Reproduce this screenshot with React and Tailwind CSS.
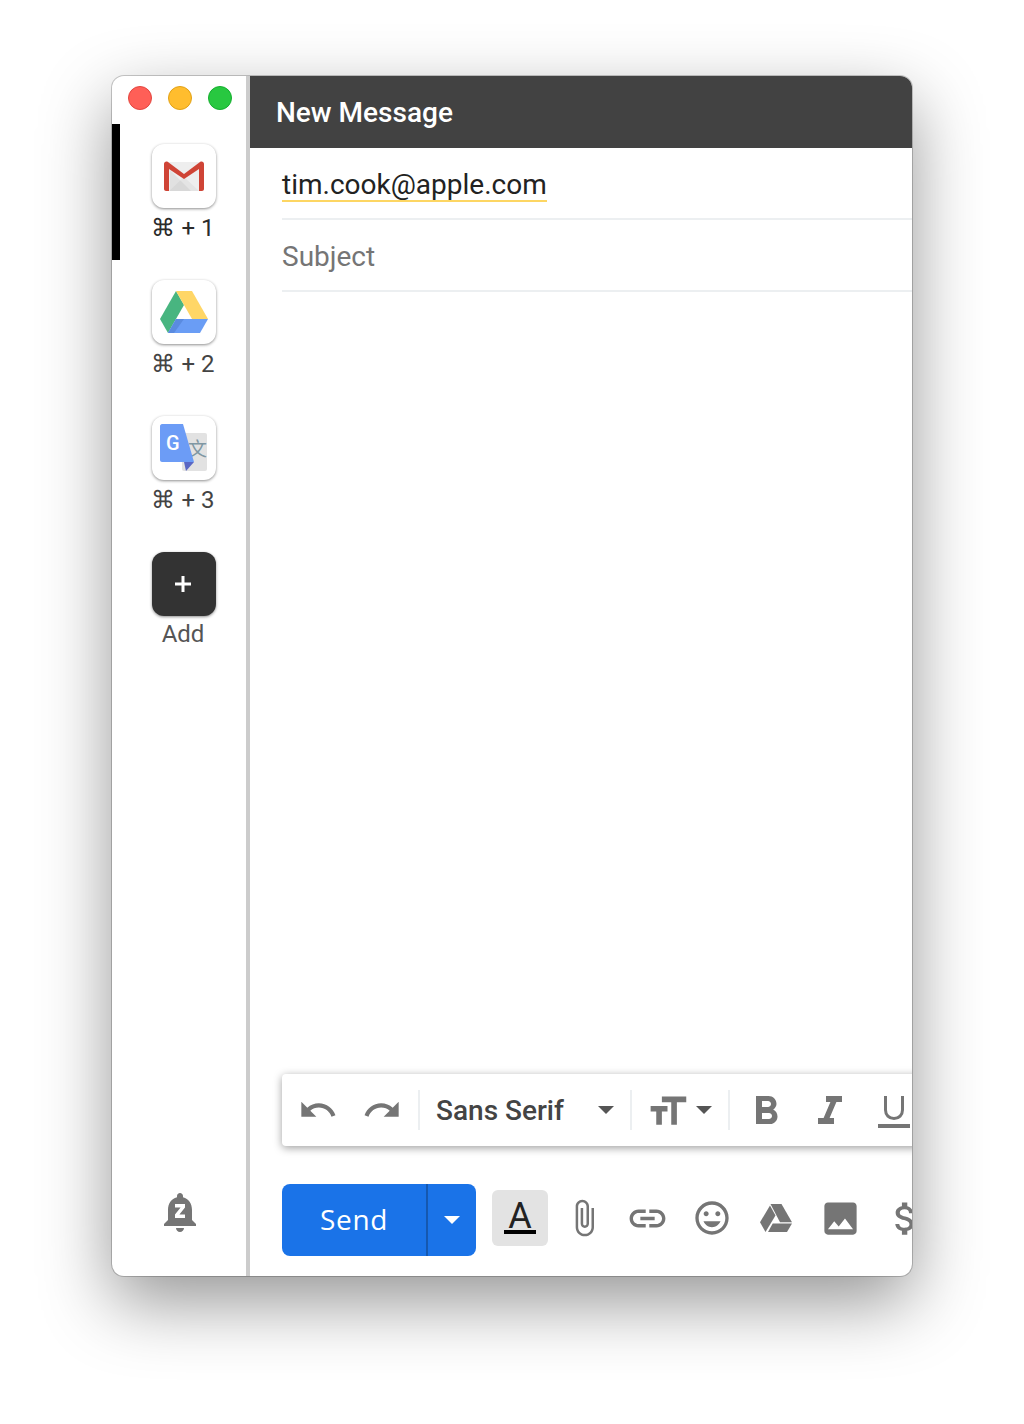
import React from 'react';

const Icon = ({ d, size = 40, className = 'fill-[#757575]' }) => (
  <svg width={size} height={size} viewBox="0 0 24 24" className={`shrink-0 ${className}`}>
    <path d={d} fillRule="evenodd" />
  </svg>
);

const UNDO = 'M12.5 8c-2.65 0-5.05.99-6.9 2.6L2 7v9h9l-3.62-3.62c1.39-1.16 3.16-1.88 5.12-1.88 3.54 0 6.55 2.31 7.6 5.5l2.37-.78C21.08 11.03 17.15 8 12.5 8z';
const REDO = 'M18.4 10.6C16.55 8.99 14.15 8 11.5 8c-4.65 0-8.58 3.03-9.96 7.22L3.9 16c1.05-3.19 4.05-5.5 7.6-5.5 1.95 0 3.73.72 5.12 1.88L13 16h9V7l-3.6 3.6z';
const SIZE = 'M9 4v3h5v12h3V7h5V4H9zm-6 8h3v7h3v-7h3V9H3v3z';
const BOLD = 'M15.6 10.79c.97-.67 1.65-1.77 1.65-2.79 0-2.26-1.75-4-4-4H7v14h7.04c2.09 0 3.71-1.7 3.71-3.79 0-1.52-.86-2.82-2.15-3.42zM10 6.5h3c.83 0 1.5.67 1.5 1.5s-.67 1.5-1.5 1.5h-3v-3zm3.5 9H10v-3h3.5c.83 0 1.5.67 1.5 1.5s-.67 1.5-1.5 1.5z';
const ITALIC = 'M10 4v3h2.21l-3.42 8H6v3h8v-3h-2.21l3.42-8H18V4z';
const CLIP = 'M16.5 6v11.5c0 2.21-1.79 4-4 4s-4-1.79-4-4V5c0-1.38 1.12-2.5 2.5-2.5s2.5 1.12 2.5 2.5v10.5c0 .55-.45 1-1 1s-1-.45-1-1V6H10v9.5c0 1.38 1.12 2.5 2.5 2.5s2.5-1.12 2.5-2.5V5c0-2.21-1.79-4-4-4S7 2.79 7 5v12.5c0 3.04 2.46 5.5 5.5 5.5s5.5-2.46 5.5-5.5V6h-1.5z';
const LINK = 'M3.9 12c0-1.71 1.39-3.1 3.1-3.1h4V7H7c-2.76 0-5 2.24-5 5s2.24 5 5 5h4v-1.9H7c-1.71 0-3.1-1.39-3.1-3.1zM8 13h8v-2H8v2zm9-6h-4v1.9h4c1.71 0 3.1 1.39 3.1 3.1s-1.39 3.1-3.1 3.1h-4V17h4c2.76 0 5-2.24 5-5s-2.24-5-5-5z';
const SMILE = 'M11.99 2C6.47 2 2 6.48 2 12s4.47 10 9.99 10C17.52 22 22 17.52 22 12S17.52 2 11.99 2zM12 20c-4.42 0-8-3.58-8-8s3.58-8 8-8 8 3.58 8 8-3.58 8-8 8zm3.5-9c.83 0 1.5-.67 1.5-1.5S16.33 8 15.5 8 14 8.67 14 9.5s.67 1.5 1.5 1.5zm-7 0c.83 0 1.5-.67 1.5-1.5S9.33 8 8.5 8 7 8.67 7 9.5 7.67 11 8.5 11zm3.5 6.5c2.33 0 4.31-1.46 5.11-3.5H6.89c.8 2.04 2.78 3.5 5.11 3.5z';
const IMAGE = 'M21 19V5c0-1.1-.9-2-2-2H5c-1.1 0-2 .9-2 2v14c0 1.1.9 2 2 2h14c1.1 0 2-.9 2-2zM8.5 13.5l2.5 3.01L14.5 12l4.5 6H5l3.5-4.5z';
const DOLLAR = 'M11.8 10.9c-2.27-.59-3-1.2-3-2.15 0-1.09 1.01-1.85 2.7-1.85 1.78 0 2.44.85 2.5 2.1h2.21c-.07-1.72-1.12-3.3-3.21-3.81V3h-3v2.16c-1.94.42-3.5 1.68-3.5 3.61 0 2.31 1.91 3.46 4.7 4.13 2.5.6 3 1.48 3 2.41 0 .69-.49 1.79-2.7 1.79-2.06 0-2.87-.92-2.98-2.1h-2.2c.12 2.19 1.76 3.42 3.68 3.83V21h3v-2.15c1.95-.37 3.5-1.5 3.5-3.55 0-2.84-2.43-3.81-4.7-4.4z';
const BELL = 'M12 22c1.1 0 2-.9 2-2h-4c0 1.1.89 2 2 2zm6-6v-5c0-3.07-1.64-5.64-4.5-6.32V4c0-.83-.67-1.5-1.5-1.5s-1.5.67-1.5 1.5v.68C7.63 5.36 6 7.93 6 11v5l-2 2v1h16v-1l-2-2zm-3.5-6.2l-2.8 3.4h2.8V15h-5v-1.8l2.8-3.4H9.5V8h5v1.8z';

const GmailLogo = () => (
  <svg width="40" height="30" viewBox="0 0 40 30">
    <rect x="2" y="1" width="36" height="29" fill="#eeeeee" />
    <path d="M5 30 L20 16 L35 30 Z" fill="#e4e4e4" />
    <path d="M6 9 L27 30 H6 Z" fill="#000" opacity="0.05" />
    <path d="M0 3 C0 1 2 0 4 1 L20 13 L36 1 C38 0 40 1 40 3 V28 C40 29 39 30 38 30 H35 V8 L20 18 L5 8 V30 H2 C1 30 0 29 0 28 Z" fill="#cf4436" />
  </svg>
);

const DriveLogo = () => (
  <svg width="48" height="42" viewBox="0 0 48 42">
    <path d="M16 0 L0 28 L8 42 L24 14 Z" fill="#48b580" />
    <path d="M16 0 H32 L48 28 H32 Z" fill="#ffd666" />
    <path d="M16 28 H48 L40 42 H8 Z" fill="#6a9df5" />
    <path d="M16 28 H24 L14 42 H8 Z" fill="#5a8be0" />
  </svg>
);

const TranslateLogo = () => (
  <svg width="48" height="48" viewBox="0 0 48 48">
    <rect x="22" y="9" width="25" height="38" rx="2" fill="#e2e2e2" />
    <text x="28" y="32" fontSize="19" fill="#7f97a3" fontFamily="'Noto Sans CJK SC', sans-serif">文</text>
    <path d="M2 0 H23 L34 38 H2 C1 38 0 37 0 36 V2 C0 1 1 0 2 0 Z" fill="#6c9cf6" />
    <path d="M24 38 H34 L26 47 Z" fill="#5a67c4" />
    <text x="6" y="26" fontSize="20" fontWeight="500" fill="#fff" fontFamily="Roboto, sans-serif">G</text>
  </svg>
);

const APPS = [
  { logo: <GmailLogo />, label: '⌘ + 1', active: true },
  { logo: <DriveLogo />, label: '⌘ + 2' },
  { logo: <TranslateLogo />, label: '⌘ + 3' },
];

const Caret = ({ className = 'border-t-[#555]' }) => (
  <span className={`block w-0 h-0 border-x-8 border-x-transparent border-t-8 ${className}`} />
);

const Sep = () => <span className="block w-0.5 h-10 bg-[#eceff1] shrink-0" />;

export default function App() {
  return (
    <div className="h-[1424px] bg-white pt-[76px] overflow-hidden font-['Roboto',sans-serif]">
      <div className="mx-auto w-[800px] h-[1200px] rounded-xl overflow-hidden flex bg-white shadow-[0_0_0_1px_rgba(0,0,0,0.2),0_26px_70px_0_rgba(0,0,0,0.42)]">
        {/* App switcher */}
        <aside className="w-[138px] shrink-0 border-r-4 border-[#cccccc] flex flex-col">
          <div className="h-12 shrink-0 flex items-start gap-4 pl-4 pt-2.5">
            <span className="size-6 rounded-full bg-[#ff5f57] border border-[#e2463f]" />
            <span className="size-6 rounded-full bg-[#ffbd2e] border border-[#e1a116]" />
            <span className="size-6 rounded-full bg-[#28c840] border border-[#14ae2e]" />
          </div>
          {APPS.map((app) => (
            <div
              key={app.label}
              className={`h-[136px] shrink-0 flex flex-col items-center pt-5 pl-0.5 border-l-8 ${app.active ? 'border-black' : 'border-transparent'}`}
            >
              <div className="size-16 rounded-xl bg-white flex items-center justify-center shadow-[0_1px_3px_rgba(0,0,0,0.45)]">
                {app.logo}
              </div>
              <span className={`mt-1.5 -ml-0.5 text-2xl leading-7 ${app.active ? 'text-[#2b2b2b]' : 'text-[#444444]'}`}>{app.label}</span>
            </div>
          ))}
          <div className="shrink-0 flex flex-col items-center pt-5 pl-2.5">
            <div className="size-16 rounded-xl bg-[#333333] flex items-center justify-center shadow-[0_1px_3px_rgba(0,0,0,0.45)]">
              <svg width="16" height="16" viewBox="0 0 16 16" className="fill-white -ml-0.5">
                <path d="M6.5 0h3v6.5H16v3H9.5V16h-3V9.5H0v-3h6.5z" />
              </svg>
            </div>
            <span className="mt-1 -ml-0.5 text-2xl leading-7 text-[#555555]">Add</span>
          </div>
          <div className="mt-auto pb-10 pl-11 flex justify-start">
            <Icon d={BELL} size={48} />
          </div>
        </aside>

        {/* Compose */}
        <main className="flex-1 min-w-0 flex flex-col">
          <header className="h-[72px] shrink-0 bg-[#424242] flex items-center pl-[26px] pt-0.5 text-[28px] font-medium text-white">
            New Message
          </header>
          <div className="ml-8 h-[72px] shrink-0 border-b-2 border-[#eceff1] pt-[22px]">
            <span className="inline-block text-[28px] leading-[30px] text-[#222222] border-b-2 border-[#fdd663]">tim.cook@apple.com</span>
          </div>
          <div className="ml-8 h-[72px] shrink-0 border-b-2 border-[#eceff1] pt-[22px] text-[28px] leading-[30px] text-[#757575]">
            Subject
          </div>
          <div className="flex-1" />

          {/* Formatting bar */}
          <div className="ml-8 h-[72px] w-[700px] shrink-0 rounded-l bg-white flex items-center shadow-[0_2px_8px_rgba(0,0,0,0.38)]">
            <span className="ml-4"><Icon d={UNDO} /></span>
            <span className="ml-6"><Icon d={REDO} /></span>
            <span className="ml-4"><Sep /></span>
            <span className="ml-4 w-[162px] pt-0.5 text-[28px] font-medium text-[#444444]">Sans Serif</span>
            <Caret />
            <span className="ml-4"><Sep /></span>
            <span className="ml-[13px] mt-0.5"><Icon d={SIZE} size={45} /></span>
            <span className="ml-1.5"><Caret /></span>
            <span className="ml-4"><Sep /></span>
            <span className="ml-3 mt-1"><Icon d={BOLD} size={48} /></span>
            <span className="ml-4 mt-1"><Icon d={ITALIC} size={48} /></span>
            <svg width="32" height="32" viewBox="0 0 32 32" className="ml-6 mt-1 shrink-0">
              <path d="M7.5 0 V14 C7.5 19 11 22.5 16 22.5 C21 22.5 24.5 19 24.5 14 V0" fill="none" stroke="#757575" strokeWidth="3" />
              <rect y="28" width="32" height="4" fill="#757575" />
            </svg>
          </div>

          {/* Send row */}
          <div className="ml-8 mt-[38px] mb-5 h-[72px] w-[700px] shrink-0 flex items-start">
            <div className="w-[194px] h-[72px] shrink-0 rounded-lg bg-[#1a73e8] flex items-center">
              <span className="w-[146px] pb-0.5 text-[28px] tracking-wide text-white font-['Open_Sans',sans-serif] font-normal border-r-2 border-[#1558b0] h-full flex items-center justify-center">Send</span>
              <span className="flex-1 flex justify-center"><Caret className="border-t-white" /></span>
            </div>
            <div className="mt-1.5 h-14 flex items-center">
              <div className="ml-4 size-14 shrink-0 rounded-md bg-[#e3e3e3] flex flex-col items-center justify-center">
                <span className="text-4xl leading-7 text-[#222222]">A</span>
                <span className="block w-8 h-1 bg-black" />
              </div>
              <span className="ml-4"><Icon d={CLIP} /></span>
              <span className="ml-[22px]"><Icon d={LINK} size={43} /></span>
              <span className="ml-[23px]"><Icon d={SMILE} /></span>
              <svg width="32" height="28" viewBox="0 0 32 28" className="ml-[28px] shrink-0 fill-[#757575]">
                <path d="M10.5 0 H21.5 L32 18.3 H20 Z" />
                <path d="M0 18.3 L10 1.5 L15.5 11.5 L5.5 28 Z" />
                <path d="M8 28 L12.7 19.5 H32 L27 28 Z" />
              </svg>
              <span className="ml-[27px]"><Icon d={IMAGE} size={43} /></span>
              <span className="ml-[22px]"><Icon d={DOLLAR} size={43} /></span>
            </div>
          </div>
        </main>
      </div>
    </div>
  );
}
